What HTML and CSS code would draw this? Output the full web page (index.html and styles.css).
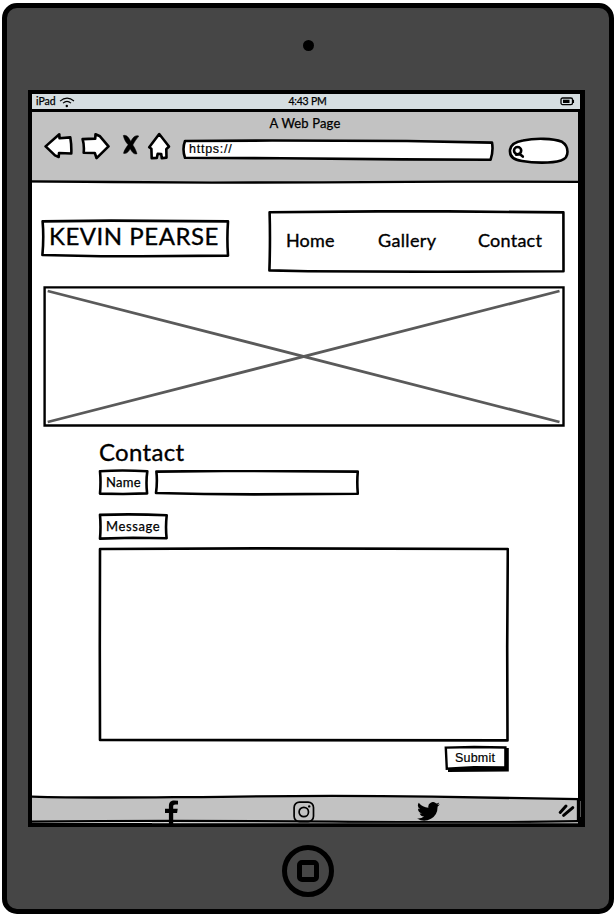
FILE: index.html
```html
<!DOCTYPE html>
<html lang="en">
<head>
<meta charset="utf-8">
<title>A Web Page</title>
<link rel="stylesheet" href="styles.css">
</head>
<body>
<div class="tablet">
  <div class="bezel-top"><span class="camera"></span></div>
  <div class="screen">
    <div class="status">
      <span class="carrier">iPad
        <svg class="wifi" width="16" height="11" viewBox="0 0 16 11"><path d="M1 4.2Q8-1.8 15 4M4 6.2Q8 2.6 12 6.2"/><circle cx="7.8" cy="9" r="1.2"/></svg>
      </span>
      <span class="clock">4:43 PM</span>
      <svg class="battery" width="15" height="9" viewBox="0 0 15 9"><rect class="case" x="1" y="1" width="11.5" height="6.6" rx="1.6"/><rect class="charge" x="3" y="2.7" width="6.5" height="3.3"/><path class="case" d="M13.4 2.8v3.2"/></svg>
    </div>
    <header class="browser">
      <div class="title">A Web Page</div>
      <div class="tools">
        <svg class="ink back" width="30" height="28" viewBox="0 0 30 28"><path d="M1.6 14.4 15.3 2.3 15.5 6.2 26.3 5.4Q27.6 13 27.3 21.5L15 21 14.7 25 11 23.4Z"/></svg>
        <svg class="ink forward" width="30" height="28" viewBox="0 0 30 28"><path d="M1.6 7.1 14.2 6.6 14.5 2.3 19 4.3 27.5 14.4 15.6 26.2 13.8 21 2.7 20.8Q3.4 13 1.6 7.1Z"/></svg>
        <svg class="stop" width="18" height="22" viewBox="0 0 18 22"><path d="M1.3 1.5C5 .5 7 4.2 8.8 7.5C10.4 4 13.4 .3 16.8 2.1C14.8 4.8 12.2 8 10.8 11C12.7 13.8 14.2 16.7 15 19.8C11.6 20.7 10 17.8 8.2 14.8C6.5 17.8 4.5 20.2 1.5 19.3C2.2 16 4.4 13.1 6.2 10.8C3.6 8.2 2 4.8 1.3 1.5Z"/></svg>
        <svg class="ink house" width="24" height="28" viewBox="0 0 24 28"><path d="M12.2 2 22 14.5 19.3 17.2 19.5 25.6 14.8 26.2 14.2 22 10.7 21.8 9.8 26 4.7 26.1 4.4 16.8 2.2 15.2Z"/></svg>
        <div class="address"><svg class="ink frame" width="312" height="22" viewBox="0 0 312 22"><path d="M3 2 90 1.5 225 2 310 3.6C311 9 310.5 15 308.6 20.7L220 20.4 100 19.2 3 18.8Q0 10 3 2Z"/></svg><span>https://</span></div>
        <svg class="ink search" width="62" height="28" viewBox="0 0 62 28"><path d="M15 3.5C27 1 45 1.2 54 4.8C61 9 62 21 53 23.4C43 26.4 26 26.1 14 24C5 23 1.5 18.5 2 13C2.6 8 7 4.7 15 3.5Z"/><circle cx="9.6" cy="13.6" r="3.6"/><path d="M8 17.7 12 17.2 14.8 19.6"/></svg>
      </div>
      <svg class="rule" width="546" height="4" viewBox="0 0 546 4"><path d="M0 1.4 80 2 180 2.6 290 2.4 420 1.6 546 1.8"/></svg>
    </header>
    <main>
      <div class="masthead">
        <h1 class="boxed logo"><svg class="ink frame" width="190" height="40" viewBox="0 0 190 40"><path d="M1.6 2.4 70 1.6 187 2.4Q185.8 20 187 36.6L100 37.2 60 37.2 1.4 36Q3 18 1.6 2.4Z"/></svg>KEVIN PEARSE</h1>
        <nav class="boxed"><svg class="ink frame" width="298" height="63" viewBox="0 0 298 63"><path d="M1.6 2.2 110 1.4 180 1.4 295.4 2.4 295.5 61.3 170 61.8 40 61.2 1.4 60.4Q2.4 30 1.6 2.2Z"/></svg><a class="home">Home</a><a class="gallery">Gallery</a><a class="contact">Contact</a></nav>
      </div>
      <svg class="hero" width="522" height="141" viewBox="0 0 522 141"><path class="edge" d="M1.6 1.4H520.5V139.5H1.6Z"/><path class="cross" d="M4.7 5 516.5 136M4.7 136 516.5 5"/></svg>
      <form>
        <h2>Contact</h2>
        <div class="row">
          <label class="boxed name"><svg class="ink frame" width="51" height="27" viewBox="0 0 51 27"><path d="M2 2.2Q25 .8 49.3 2.3Q47.8 13 49.1 24.4L25 25 2 24.6Q3 13 2 2.2Z"/></svg>Name</label>
          <div class="boxed field"><svg class="ink frame" width="205" height="26" viewBox="0 0 205 26"><path d="M2.4 1.6 70 .9 203.8 1.6Q202.8 12 203.8 23.7L100 24.4 50 24 2 23Q3.5 12 2.4 1.6Z"/></svg></div>
        </div>
        <label class="boxed message"><svg class="ink frame" width="70" height="28" viewBox="0 0 70 28"><path d="M2 1.9Q35 .7 68.7 2.3Q67.4 14 68.6 25.2L35 24.8 2 25.6Q3 14 2 1.9Z"/></svg>Message</label>
        <div class="boxed area"><svg class="ink frame" width="411" height="195" viewBox="0 0 411 195"><path d="M2 2 160 1.4 409.8 2 409.2 100 409.5 193.4 2 193 1.8 100Z"/></svg></div>
        <div class="submit"><svg class="frame" width="66" height="28" viewBox="0 0 66 28"><path class="shade" d="M4 3H64.8V26.6L4 27Z"/><path class="face" d="M1.8 2.6 30 2 61.4 2.5V22.4L30 22.2 2.8 23.8Z"/></svg>Submit</div>
      </form>
    </main>
    <footer>
      <svg class="frame" width="550" height="31" viewBox="0 0 550 31"><path class="fill" d="M0 2.6C60 4.5 120 3.2 190 2.8C260 1.6 330 1.6 400 2.6L546 5.2V28H0Z"/><path class="rim" d="M0 2.6C60 4.5 120 3.2 190 2.8C260 1.6 330 1.6 400 2.6L546 5.2V27.5"/><path class="rim" d="M0 27.6Q130 26.2 300 27.6T546 27.1"/><path class="glint" d="M120 29.1 546 29.2M548.5 7V23"/></svg>
      <svg class="facebook" width="15" height="24" viewBox="0 0 15 24"><path d="M4.9 24V13H1V8.7H4.9V6.2C4.9 2 7 .5 10.3 .5L14 .8V4.4H11.5C9.7 4.4 9.2 5.2 9.2 6.6V8.7H13.7L13.1 13H9.2V24Z"/></svg>
      <svg class="instagram" width="22" height="22" viewBox="0 0 22 22"><rect x="1.1" y="1.1" width="19.4" height="19.6" rx="5.4"/><circle cx="10.8" cy="11" r="4.7"/><circle class="dot" cx="16.2" cy="5.4" r="1.2"/></svg>
      <svg class="twitter" width="23" height="19" viewBox="0 0 24 20"><path d="M24 2.4A9.7 9.7 0 0 1 21.2 3.1 4.9 4.9 0 0 0 23.3.4a9.8 9.8 0 0 1-3.1 1.2A4.9 4.9 0 0 0 11.9 6.1 14 14 0 0 1 1.7.9a4.9 4.9 0 0 0 1.5 6.6A4.9 4.9 0 0 1 1 6.9a4.9 4.9 0 0 0 3.9 4.9 5 5 0 0 1-2.2.1 4.9 4.9 0 0 0 4.6 3.4A9.9 9.9 0 0 1 0 17.3 14 14 0 0 0 21.5 4.9 10 10 0 0 0 24 2.4Z"/></svg>
      <svg class="grip" width="18" height="15" viewBox="0 0 18 15"><path d="M2.2 9.4 8 3M5.6 12.4 14.8 4.6"/></svg>
    </footer>
  </div>
  <div class="bezel-bottom"><span class="home-key"><span></span></span></div>
</div>
</body>
</html>
```

FILE: styles.css
```css
* { box-sizing: border-box; }
body { margin: 0; background: #fff; color: #000; font-family: Lato, "Liberation Sans", sans-serif; }
svg { display: block; flex: none; }
h1, h2 { margin: 0; font-weight: 400; }

.tablet { width: 612px; height: 911px; margin: 3px 2px 2px; border: 5px solid #000; border-radius: 15px; background: #464646; display: flex; flex-direction: column; }
.bezel-top { height: 82px; padding-top: 32px; display: flex; justify-content: center; }
.camera { width: 11px; height: 11px; border-radius: 50%; background: #000; }
.screen { width: 557px; height: 737px; margin-left: 21px; border: solid #000; border-width: 4px 7px 4px 4px; background: #fff; display: flex; flex-direction: column; }
.bezel-bottom { display: flex; justify-content: center; padding-top: 18px; }
.home-key { width: 52px; height: 52px; border: 5px solid #000; border-radius: 50%; display: grid; place-items: center; }
.home-key span { width: 22px; height: 22px; border: 5px solid #000; border-radius: 5px; }

.status { width: 548px; height: 18px; border-bottom: 3px solid #000; background: #d6dee1; display: grid; grid-template-columns: 1fr auto 1fr; align-items: center; font-size: 10.5px; line-height: 15px; padding: 0 5px 0 4px; -webkit-text-stroke: .25px #000; }
.carrier { display: flex; gap: 4px; }
.clock { font-size: 10.5px; letter-spacing: -.2px; padding-left: 4px; }
.wifi { margin: 3px 0 0 -1px; }
.wifi path { fill: none; stroke: #000; stroke-width: 1.1; }
.battery { justify-self: end; }
.case { fill: none; stroke: #000; stroke-width: 1.3; }

.ink { fill: #fff; stroke: #000; stroke-width: 2.6; stroke-linejoin: round; stroke-linecap: round; }
.boxed, .address, .submit, footer { position: relative; z-index: 0; }
.frame { position: absolute; left: 0; top: 0; z-index: -1; }

.browser { height: 71px; background: #c2c2c2; display: flex; flex-direction: column; }
.title { flex: none; height: 20px; line-height: 22px; font-size: 13px; text-align: center; letter-spacing: .15px; -webkit-text-stroke: .25px #000; }
.tools { flex: none; height: 48px; display: flex; align-items: flex-start; padding-left: 12px; }
.forward { margin-left: 7px; }
.stop { margin: 2px 0 0 11px; }
.stop path { stroke: #000; stroke-width: .5; }
.house { margin-left: 7px; }
.address { width: 312px; height: 22px; margin: 7px 0 0 11px; padding-left: 7px; font: 12.5px/21px "Liberation Sans", sans-serif; letter-spacing: .75px; -webkit-text-stroke: .2px #000; }
.search { margin: 5px 0 0 14px; }
.rule path, .rim { fill: none; stroke: #000; stroke-width: 2.3; }

main { height: 612px; padding: 27px 0 0 9px; }
.masthead { display: flex; }
.logo { width: 190px; height: 40px; margin-top: 9px; padding-left: 8px; font-size: 24px; line-height: 34px; letter-spacing: .52px; white-space: nowrap; -webkit-text-stroke: .35px #000; }
nav { width: 298px; height: 63px; margin-left: 37px; display: flex; font-size: 18px; line-height: 60px; letter-spacing: .15px; -webkit-text-stroke: .35px #000; }
.home { width: 92px; margin-left: 18px; }
.gallery { width: 100px; letter-spacing: .35px; }
.contact { letter-spacing: .25px; }
.hero { margin: 13px 0 0 2px; }
.edge { fill: #fff; stroke: #000; stroke-width: 2.4; }
.cross { fill: none; stroke: #5a5a5a; stroke-width: 2.8; }

form { padding-left: 57px; }
h2 { height: 42px; padding: 10px 0 0 1px; font-size: 24px; line-height: 29px; letter-spacing: .3px; -webkit-text-stroke: .35px #000; }
.row { display: flex; gap: 5px; }
.name, .message { display: block; font-size: 13px; line-height: 26px; padding-left: 8px; letter-spacing: .3px; -webkit-text-stroke: .25px #000; }
.name { width: 51px; height: 27px; }
.field { width: 205px; height: 26px; margin-top: 1px; }
.message { width: 70px; height: 28px; margin-top: 17px; letter-spacing: .6px; }
.area { width: 411px; height: 195px; margin-top: 6px; }
.submit { width: 66px; height: 28px; margin: 3px 0 0 346px; padding-left: 11px; font: 12.5px/26px "Liberation Sans", sans-serif; letter-spacing: .2px; -webkit-text-stroke: .2px #000; }
.shade { fill: #000; }
.face { fill: #fff; stroke: #000; stroke-width: 2.4; }

footer { height: 29px; display: flex; align-items: flex-start; padding-left: 132px; }
.fill { fill: #c2c2c2; }
.glint { fill: none; stroke: #777; stroke-width: .7; }
.facebook { margin-top: 6px; }
.instagram { margin: 7px 0 0 114px; }
.instagram rect, .instagram circle { fill: none; stroke: #000; stroke-width: 1.7; }
.instagram .dot { fill: #000; stroke: none; }
.twitter { margin: 8px 0 0 102px; }
.grip { margin: 9px 0 0 118px; }
.grip path { stroke: #000; stroke-width: 3; stroke-linecap: round; fill: none; }
```
